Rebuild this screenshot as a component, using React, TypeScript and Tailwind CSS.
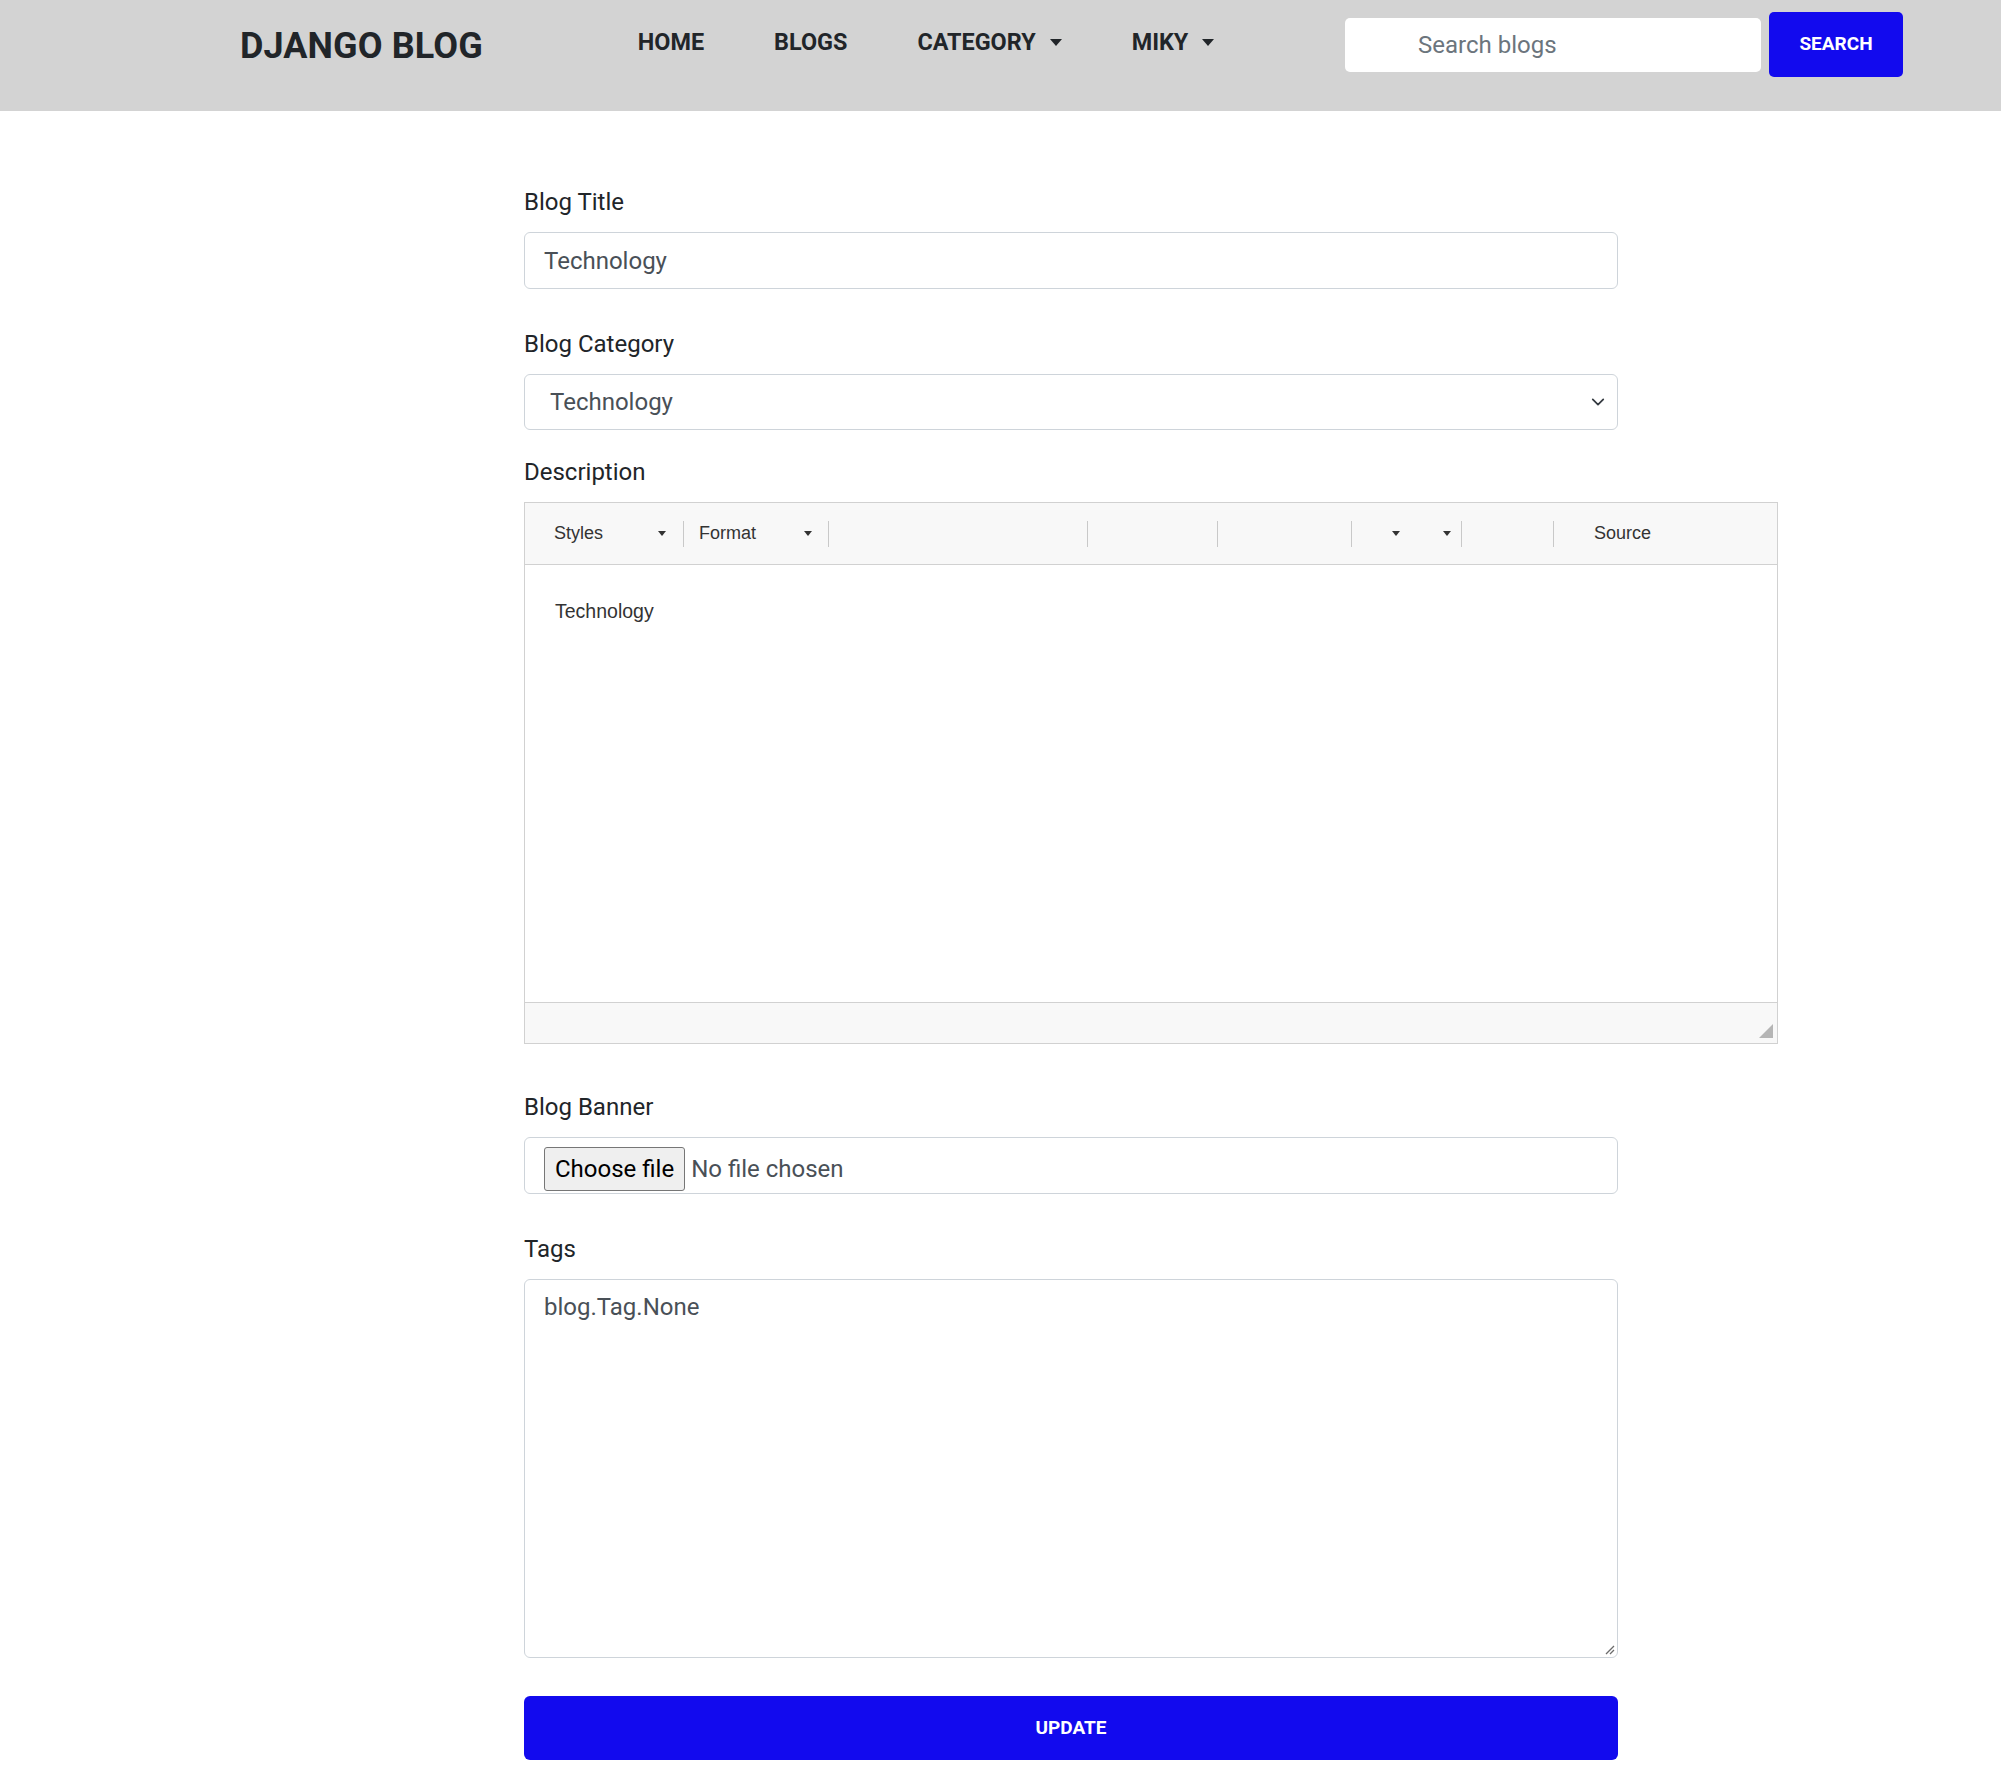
import { FC } from 'react';

const Caret: FC<{ className?: string }> = ({ className = '' }) => (
  <span className={`inline-block w-0 h-0 border-x-[6px] border-x-transparent border-t-[7px] border-t-[#212529] ${className}`} />
);

const SmallArrow: FC = () => (
  <span className="inline-block w-0 h-0 border-x-[4px] border-x-transparent border-t-[5px] border-t-[#333]" />
);

const Sep: FC = () => <div className="w-px h-[26px] bg-[#c9c9c9] shrink-0" />;

const Navbar: FC = () => (
  <nav className="h-[111px] bg-[#d3d3d3] font-['Roboto',sans-serif]">
    <div className="h-[89px] flex items-center">
      <a className="ml-[240px] text-[36px] font-bold text-[#212529] leading-none tracking-[0.1px] mt-[2px]">DJANGO BLOG</a>
      <ul className="ml-[155px] flex items-center gap-[70px] -mt-[3px] text-[23.4px] font-bold text-[#212529]">
        <li>HOME</li>
        <li>BLOGS</li>
        <li className="flex items-center gap-[14px]">
          CATEGORY <Caret />
        </li>
        <li className="flex items-center gap-[14px]">
          MIKY <Caret />
        </li>
      </ul>
      <div className="ml-auto mr-[98px] flex items-center gap-[8px]">
        <div className="w-[416px] h-[54px] bg-white rounded-[5px] flex items-center pl-[73px] text-[24px] text-[#6c757d]">
          Search blogs
        </div>
        <button className="w-[134px] h-[65px] bg-[#120aee] rounded-[5px] text-white text-[19px] font-bold">SEARCH</button>
      </div>
    </div>
  </nav>
);

const Label: FC<{ children: string }> = ({ children }) => (
  <label className="block text-[24px] leading-[36px] text-[#212529] mb-[12px]">{children}</label>
);

const Toolbar: FC = () => (
  <div className="h-[62px] bg-[#f8f8f8] border-b border-[#d1d1d1] flex items-center text-[18px] text-[#333] font-['Liberation_Sans',Arial,sans-serif]">
    <div className="w-[158px] flex items-center pl-[29px] pr-[17px]">
      <span>Styles</span>
      <span className="ml-auto flex"><SmallArrow /></span>
    </div>
    <Sep />
    <div className="w-[144px] flex items-center pl-[15px] pr-[16px]">
      <span>Format</span>
      <span className="ml-auto flex"><SmallArrow /></span>
    </div>
    <Sep />
    <div className="w-[258px]" />
    <Sep />
    <div className="w-[129px]" />
    <Sep />
    <div className="w-[133px]" />
    <Sep />
    <div className="w-[109px] flex items-center pl-[40px] gap-[43px]">
      <SmallArrow />
      <SmallArrow />
    </div>
    <Sep />
    <div className="w-[91px]" />
    <Sep />
    <div className="pl-[40px]">Source</div>
  </div>
);

const Editor: FC = () => (
  <div className="w-[1254px] border border-[#d1d1d1] bg-white">
    <Toolbar />
    <div className="h-[437px] pl-[30px] pt-[32px] text-[19.5px] text-[#333] font-['Liberation_Sans',Arial,sans-serif]">
      Technology
    </div>
    <div className="h-[41px] bg-[#f8f8f8] border-t border-[#d1d1d1] flex items-end justify-end pr-[4px] pb-[5px]">
      <svg width="14" height="14" viewBox="0 0 14 14">
        <polygon points="14,0 14,14 0,14" fill="#b5b5b5" />
      </svg>
    </div>
  </div>
);

const App: FC = () => (
  <div className="min-h-[1783px] bg-white font-['Roboto',sans-serif]">
    <Navbar />
    <main className="ml-[524px] w-[1094px] pt-[73px] pb-[26px]">
      <div>
        <Label>Blog Title</Label>
        <div className="h-[57px] border border-[#ced4da] rounded-[6px] flex items-center pl-[19px] text-[24px] text-[#495057]">
          Technology
        </div>
      </div>

      <div className="mt-[37px]">
        <Label>Blog Category</Label>
        <div className="h-[56px] border border-[#ced4da] rounded-[6px] flex items-center pl-[25px] pr-[12px] text-[24px] text-[#495057]">
          <span>Technology</span>
          <svg className="ml-auto" width="14" height="14" viewBox="0 0 16 16" fill="none">
            <path d="M2 5l6 6 6-6" stroke="#343a40" strokeWidth="2" strokeLinecap="round" strokeLinejoin="round" />
          </svg>
        </div>
      </div>

      <div className="mt-[24px]">
        <Label>Description</Label>
        <Editor />
      </div>

      <div className="mt-[45px]">
        <Label>Blog Banner</Label>
        <div className="h-[57px] border border-[#ced4da] rounded-[6px] flex items-start pt-[9px] pl-[19px] text-[24px]">
          <span className="h-[44px] px-[10px] flex items-center bg-[#efefef] border border-[#767676] rounded-[3px] text-black">
            Choose file
          </span>
          <span className="ml-[6px] h-[44px] flex items-center text-[#495057]">No file chosen</span>
        </div>
      </div>

      <div className="mt-[37px]">
        <Label>Tags</Label>
        <div className="relative h-[379px] border border-[#ced4da] rounded-[6px] pl-[19px] pt-[9px] text-[24px] leading-[36px] text-[#495057]">
          blog.Tag.None
          <svg className="absolute right-[2px] bottom-[2px]" width="12" height="12" viewBox="0 0 12 12">
            <path d="M11 3L3 11M11 7L7 11" stroke="#6b6b6b" strokeWidth="1.3" />
          </svg>
        </div>
      </div>

      <button className="mt-[38px] w-full h-[64px] bg-[#120aee] rounded-[6px] text-white text-[19px] font-bold">UPDATE</button>
    </main>
  </div>
);

export default App;
